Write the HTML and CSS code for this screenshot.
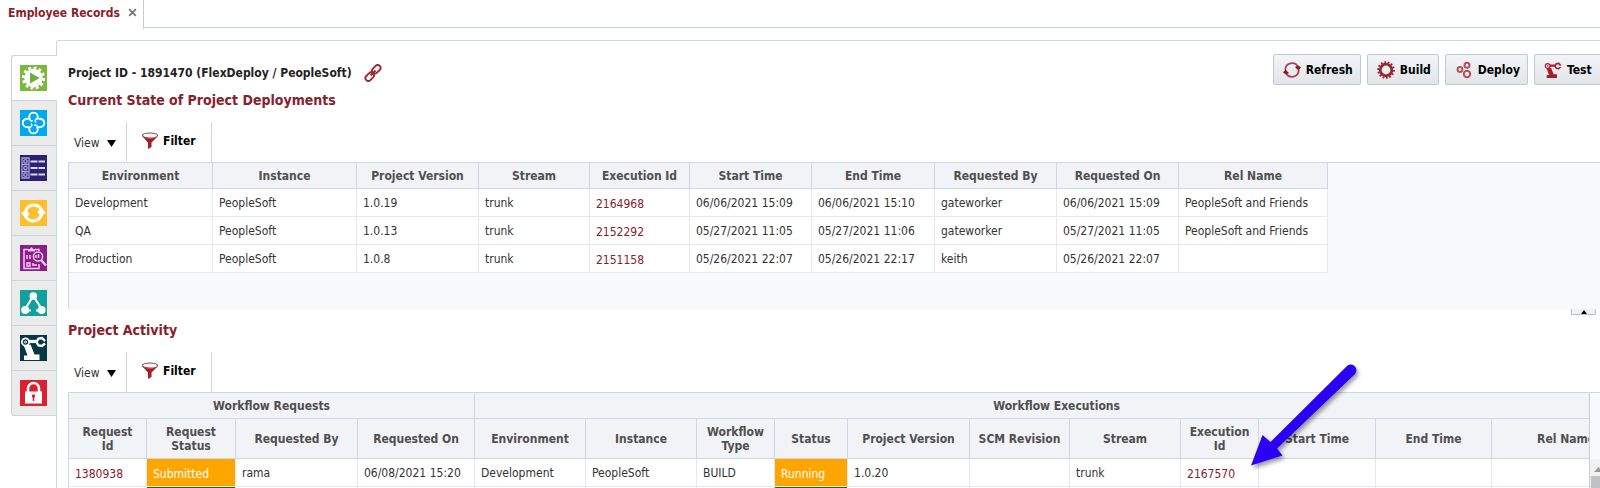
FILE: index.html
```html
<!DOCTYPE html>
<html lang="en">
<head>
<meta charset="utf-8">
<title>Employee Records</title>
<link rel="stylesheet" href="styles.css">
</head>
<body>
<svg class="defs" aria-hidden="true">
  <symbol id="funnel" viewBox="0 0 18 18">
    <path d="M1.500 4.500L7 10.500V17L10.500 15V10.500L16.500 4.500Q9 8.500 1.500 4.500Z" fill="#a51d25"/>
    <ellipse cx="9" cy="3.600" rx="7.500" ry="2.600" fill="#fff" stroke="#96414a" stroke-width="1.200"/>
  </symbol>
  <symbol id="arm" viewBox="0 0 27 26">
    <g fill="none" stroke="currentColor">
      <circle cx="5.500" cy="7" r="3.600" stroke-width="1.800"/>
      <circle cx="5.500" cy="7" r="1" stroke-width="1"/>
      <path d="M9 6.500H17" stroke-width="3.200"/>
      <path d="M25 6L22 3L18.500 3.500L16.500 7L18.500 10.500L22 11L25 8.500" stroke-width="2.400"/>
    </g>
    <path d="M4 11L10.500 9.500L14.500 19.500H19.500V25H4V20.500H7.500Z" fill="currentColor"/>
  </symbol>
</svg>

<div class="app">
  <header class="tabbar">
    <div class="tab">
      <a class="tab-link" href="#records">Employee Records</a>
      <button class="tab-close" type="button" aria-label="Close tab">
        <svg viewBox="0 0 8 8"><path d="M1 1L7 7M7 1L1 7" stroke="#777" stroke-width="1.600"/></svg>
      </button>
    </div>
    <div class="tabbar-rest"></div>
  </header>

  <div class="workspace">
    <nav class="side" aria-label="Project sections">
      <button class="side-tab active" type="button" aria-label="Executions">
        <svg viewBox="0 0 27 26"><rect width="27" height="26" fill="#7bb93c"/><circle cx="13.500" cy="13" r="9.200" fill="#fff"/><circle cx="13.500" cy="13" r="9.900" fill="none" stroke="#fff" stroke-width="3.400" pathLength="24" stroke-dasharray="1.100 .9"/><path d="M10 7.500L19.500 13L10 18.500Z" fill="#6db037"/></svg>
      </button>
      <button class="side-tab" type="button" aria-label="Configuration">
        <svg viewBox="0 0 27 26"><rect width="27" height="26" fill="#00a9ee"/><g fill="none" stroke="#fff" stroke-width="1.800"><path d="M9.500 8.500C8.500 5 10.500 2.700 13.500 2.700S18.500 5 17.500 8.500C21.500 8.500 24.300 10 24.300 13S21.500 17.500 17.500 17.500C18.500 21 16.500 23.300 13.500 23.300S8.500 21 9.500 17.500C5.500 17.500 2.700 16 2.700 13S5.500 8.500 9.500 8.500Z"/><path d="M9.500 8.500C10 11 11.500 11.500 13 10.500M17.500 8.500C15 9 14.500 11 16 12.500M17.500 17.500C17 15 15.500 14.500 14 15.500M9.500 17.500C12 17 12.500 15 11 13.500" stroke-width="1.500"/></g></svg>
      </button>
      <button class="side-tab" type="button" aria-label="Tasks">
        <svg viewBox="0 0 27 26"><rect width="27" height="26" fill="#2b2171"/><g fill="none" stroke="#aaa2dc" stroke-width="1.300"><path d="M2 3H9V23H2ZM2 9.500H9M2 16.500H9"/><circle cx="5.500" cy="6.300" r="1.700"/><circle cx="5.500" cy="13" r="1.700"/><circle cx="5.500" cy="19.700" r="1.700"/></g><path d="M10.500 6.500H25M10.500 13H25M10.500 19.500H25" stroke="#d9d5f2" stroke-width="2" stroke-dasharray="7 1"/></svg>
      </button>
      <button class="side-tab" type="button" aria-label="Sync">
        <svg viewBox="0 0 27 26"><rect width="27" height="26" fill="#fdbf2b"/><g fill="none" stroke="#fff" stroke-width="3"><path d="M5.500 12.500A8.300 8.300 0 0 1 20.500 8.500"/><path d="M21.500 13.500A8.300 8.300 0 0 1 6.500 17.500"/></g><path d="M1.500 13L6 9.500L9.500 14L5.500 19ZM25.500 13L21 16.500L17.500 12L21.500 7Z" fill="#fff"/></svg>
      </button>
      <button class="side-tab" type="button" aria-label="Reports">
        <svg viewBox="0 0 27 26"><rect width="27" height="26" fill="#8c1d87"/><g fill="none" stroke="#f0cdf0" stroke-width="1.500"><path d="M19 19V23.500H4V4.500H8M15 4.500H19V6"/><circle cx="18" cy="11.500" r="4.600"/><path d="M21 15L26 20.500" stroke-width="2.400"/><path d="M7 18H10V21H7ZM7 10V14M10 10V14M16 13V10M18.500 13V9M13 20H17M13 18V21"/></g><path d="M8 6.500V4H10Q11.500 .500 13 4H15V6.500Z" fill="#f0cdf0"/></svg>
      </button>
      <button class="side-tab" type="button" aria-label="Pipeline">
        <svg viewBox="0 0 27 26"><rect width="27" height="26" fill="#12a19a"/><path d="M12.500 7L5 19.500M14 7L22 19.500M6 20.500H21" stroke="#fff" stroke-width="2.200"/><path d="M11 20.500H16" stroke="#12a19a" stroke-width="3"/><g fill="#fff"><circle cx="13.300" cy="6" r="3.800"/><circle cx="5.200" cy="20" r="4"/><circle cx="21.600" cy="20" r="4"/></g></svg>
      </button>
      <button class="side-tab arm-tab" type="button" aria-label="Test automation">
        <svg viewBox="0 0 27 26"><rect width="27" height="26" fill="#063747"/><use href="#arm" width="27" height="26"/></svg>
      </button>
      <button class="side-tab" type="button" aria-label="Security">
        <svg viewBox="0 0 27 26"><rect width="27" height="26" fill="#dc2030"/><path d="M8 12V8.500A5.500 5.500 0 0 1 19 8.500V12" fill="none" stroke="#fff" stroke-width="2.600"/><rect x="5" y="11.500" width="17" height="12" fill="#fff"/><circle cx="13.500" cy="16" r="1.700" fill="#dc2030"/><path d="M13.500 16V21" stroke="#dc2030" stroke-width="1.600"/></svg>
      </button>
    </nav>

    <main class="panel">
      <div class="top">
        <div class="titles">
          <h1 class="project">Project ID - 1891470 (FlexDeploy / PeopleSoft)
            <a class="permalink" href="#permalink" aria-label="Project link"><svg viewBox="0 0 18 18"><g fill="none" stroke="#9c2b33" stroke-width="1.900"><rect x="-4.800" y="-2.900" width="9.600" height="5.800" rx="2.900" transform="translate(12.300 5.300) rotate(-45)"/><rect x="-4.800" y="-2.900" width="9.600" height="5.800" rx="2.900" transform="translate(5.700 12.700) rotate(-45)"/><path d="M6.500 11.500L11.500 6.500"/></g></svg></a>
          </h1>
          <h2 class="section-title">Current State of Project Deployments</h2>
        </div>
        <div class="actions">
          <button class="action" type="button"><svg viewBox="0 0 18 18"><g fill="none" stroke="#a8474e" stroke-width="1.800"><path d="M2.300 9A6.700 6.700 0 0 1 15 6"/><path d="M15.700 9A6.700 6.700 0 0 1 3 12"/></g><path d="M0 11.500L2.500 8.500L6 12L3 13.500ZM18 6.500L15.500 9.500L12 6L15 4.500Z" fill="#8e1720"/></svg>Refresh</button>
          <button class="action" type="button"><svg viewBox="0 0 18 18"><g fill="none" stroke="#98262e"><circle cx="9" cy="9" r="5.800" stroke-width="2.800"/><circle cx="9" cy="9" r="7.800" stroke-width="2" pathLength="28" stroke-dasharray="1 1"/></g></svg>Build</button>
          <button class="action" type="button"><svg viewBox="0 0 18 18"><g fill="none" stroke="#b4535a" stroke-width="2"><circle cx="5" cy="8.500" r="2.400"/><circle cx="12" cy="4.300" r="2.500"/><circle cx="12" cy="13" r="3.200"/></g></svg>Deploy</button>
          <button class="action" type="button"><svg class="red-arm" viewBox="0 0 27 26"><use href="#arm" width="27" height="26"/></svg>Test</button>
        </div>
      </div>

      <section>
        <div class="toolbar">
          <button class="view" type="button">View <svg viewBox="0 0 9 7"><path d="M0 0H9L4.500 7Z"/></svg></button>
          <button class="filter" type="button"><svg><use href="#funnel"/></svg>Filter</button>
        </div>
        <div class="grid-area deployments">
          <table class="grid">
            <colgroup><col class="w144"><col class="w144"><col class="w122"><col class="w111"><col class="w100"><col class="w122"><col class="w123"><col class="w122"><col class="w122"><col class="w149"></colgroup>
            <thead><tr><th>Environment</th><th>Instance</th><th>Project Version</th><th>Stream</th><th>Execution Id</th><th>Start Time</th><th>End Time</th><th>Requested By</th><th>Requested On</th><th>Rel Name</th></tr></thead>
            <tbody>
              <tr><td>Development</td><td>PeopleSoft</td><td>1.0.19</td><td>trunk</td><td class="low"><a href="#2164968">2164968</a></td><td>06/06/2021 15:09</td><td>06/06/2021 15:10</td><td>gateworker</td><td>06/06/2021 15:09</td><td>PeopleSoft and Friends</td></tr>
              <tr><td>QA</td><td>PeopleSoft</td><td>1.0.13</td><td>trunk</td><td class="low"><a href="#2152292">2152292</a></td><td>05/27/2021 11:05</td><td>05/27/2021 11:06</td><td>gateworker</td><td>05/27/2021 11:05</td><td>PeopleSoft and Friends</td></tr>
              <tr><td>Production</td><td>PeopleSoft</td><td>1.0.8</td><td>trunk</td><td class="low"><a href="#2151158">2151158</a></td><td>05/26/2021 22:07</td><td>05/26/2021 22:17</td><td>keith</td><td>05/26/2021 22:07</td><td></td></tr>
            </tbody>
          </table>
        </div>
      </section>

      <section>
        <div class="activity-head">
          <h2 class="section-title">Project Activity</h2>
          <button class="collapse" type="button" aria-label="Collapse pane"><svg viewBox="0 0 6 4"><path d="M0 4H6L3 0Z"/></svg></button>
        </div>
        <div class="toolbar">
          <button class="view" type="button">View <svg viewBox="0 0 9 7"><path d="M0 0H9L4.500 7Z"/></svg></button>
          <button class="filter" type="button"><svg><use href="#funnel"/></svg>Filter</button>
        </div>
        <div class="grid-area activity">
          <div class="viewport">
            <table class="grid">
              <colgroup><col class="w78"><col class="w89"><col class="w122"><col class="w117"><col class="w111"><col class="w111"><col class="w78"><col class="w73"><col class="w122"><col class="w100"><col class="w111"><col class="w78"><col class="w117"><col class="w116"><col class="w149"></colgroup>
              <thead>
                <tr><th colspan="4">Workflow Requests</th><th class="executions" colspan="11">Workflow Executions</th></tr>
                <tr class="tall"><th>Request Id</th><th>Request Status</th><th>Requested By</th><th>Requested On</th><th>Environment</th><th>Instance</th><th>Workflow Type</th><th>Status</th><th>Project Version</th><th>SCM Revision</th><th>Stream</th><th>Execution Id</th><th>Start Time</th><th>End Time</th><th>Rel Name</th></tr>
              </thead>
              <tbody>
                <tr><td class="low"><a href="#1380938">1380938</a></td><td class="low running">Submitted</td><td>rama</td><td>06/08/2021 15:20</td><td>Development</td><td>PeopleSoft</td><td>BUILD</td><td class="low running">Running</td><td>1.0.20</td><td></td><td>trunk</td><td class="low"><a href="#2167570">2167570</a></td><td></td><td></td><td></td></tr>
                <tr><td></td><td class="done"></td><td></td><td></td><td></td><td></td><td></td><td class="done"></td><td></td><td></td><td></td><td></td><td></td><td></td><td></td></tr>
              </tbody>
            </table>
          </div>
          <div class="scroll" aria-hidden="true">
            <div class="scroll-head"></div>
            <div class="scroll-track"><svg viewBox="0 0 9 5"><path d="M0 5H9L4.500 0Z" fill="#9a9a9a"/></svg><div class="thumb"></div></div>
          </div>
        </div>
      </section>
    </main>
  </div>

  <svg class="pointer" viewBox="0 0 120 120" aria-hidden="true">
    <path d="M101.500 6.500A5 5 0 0 1 110 14L32 88.500L37.500 95.500L6 105.500L17.500 75L25.500 82Z" fill="#2b00f5"/>
  </svg>
</div>
</body>
</html>
```

FILE: styles.css
```css
* { box-sizing: border-box; }

body {
  margin: 0;
  background: #fff;
  color: #333;
  font: 12px/14px "DejaVu Sans Condensed", "DejaVu Sans", Tahoma, sans-serif;
}

button {
  margin: 0;
  padding: 0;
  border: 0;
  background: none;
  color: inherit;
  font: inherit;
}

svg { display: block; }
a { color: #87212c; text-decoration: none; }
h1, h2 { margin: 0; }
.defs { position: absolute; width: 0; height: 0; }

.app {
  position: relative;
  display: flex;
  flex-direction: column;
  height: 100vh;
  overflow: hidden;
}

/* Document tabs */
.tabbar { display: flex; flex: none; align-items: flex-start; }
.tab {
  display: flex;
  align-items: center;
  gap: 8px;
  height: 29px;
  padding: 0 6px 4px 8px;
  border-right: 1px solid #c4ced7;
}
.tab-link { font-weight: bold; color: #8a1f2b; }
.tab-close svg { width: 9px; height: 9px; }
.tabbar-rest { flex: 1; height: 28px; border-bottom: 1px solid #c4d0d8; }

/* Side navigation and panel */
.workspace { display: flex; flex: 1; min-height: 0; padding: 11px 0 0 11px; }
.side { position: relative; z-index: 1; flex: none; width: 45px; margin-top: 15px; }
.side-tab {
  display: flex;
  align-items: center;
  width: 45px;
  height: 45px;
  padding-left: 8px;
  border: 1px solid #ccd3da;
  border-width: 0 0 1px 1px;
  background: #ebebeb;
}
.side-tab.active {
  width: 46px;
  height: 46px;
  border-top-width: 1px;
  border-top-left-radius: 3px;
  background: #fff;
}
.side-tab:last-child { border-bottom-left-radius: 3px; }
.side-tab svg { width: 27px; height: 26px; }
.arm-tab { color: #fff; }
.panel {
  flex: 1;
  min-width: 0;
  padding-left: 11px;
  border: 1px solid #ccd8e0;
  border-width: 1px 0 0 1px;
  border-top-left-radius: 3px;
}

/* Title and actions */
.top { display: flex; justify-content: space-between; height: 81px; }
.titles { padding-top: 22px; }
.project {
  display: flex;
  align-items: center;
  gap: 12px;
  height: 20px;
  font-size: 12px;
  color: #222;
}
.permalink svg { width: 18px; height: 18px; }
.section-title { font-size: 14px; line-height: 18px; color: #87212c; }
.titles .section-title { margin-top: 8px; }
.actions { display: flex; gap: 6px; margin: 13px -2px 0 0; }
.action {
  display: flex;
  align-items: center;
  gap: 5px;
  min-width: 68px;
  height: 31px;
  padding: 0 7px 0 9px;
  border: 1px solid #c0c8d0;
  border-radius: 2px;
  background: linear-gradient(#f3f4f6, #e1e5e9);
  color: #000;
  font-weight: bold;
}
.action svg { width: 18px; height: 18px; }
.red-arm { color: #a5202a; }

/* Table toolbars */
.toolbar { display: flex; height: 40px; }
.view {
  display: flex;
  align-items: center;
  gap: 7px;
  width: 59px;
  padding: 2px 0 0 6px;
  border-right: 1px solid #ccd6e0;
}
.view svg { width: 9px; height: 7px; }
.filter {
  display: flex;
  align-items: center;
  gap: 4px;
  width: 85px;
  padding: 0 0 2px 14px;
  border-right: 1px solid #ccd6e0;
  color: #000;
  font-weight: bold;
}
.filter svg { width: 18px; height: 18px; }

/* Data grids */
.grid-area { border: 1px solid #ccd9e5; border-width: 1px 0 0 1px; background: #f7f9fc; }
.deployments { min-height: 147px; }
.grid { table-layout: fixed; width: 0; border-spacing: 0; background: #fff; }
.grid th {
  height: 26px;
  padding: 0 8px;
  border: 1px solid #ccd9e5;
  border-width: 0 1px 1px 0;
  background: #f1f3f7;
  color: #4f4f4f;
}
.grid .tall th { height: 40px; }
.grid th.executions { padding-right: 10px; }
.grid td {
  height: 28px;
  padding: 0 0 0 6px;
  border: 1px solid #e3e9ee;
  border-width: 0 1px 1px 0;
  background-clip: padding-box;
  white-space: nowrap;
}
.grid td.low { padding-top: 2px; }
.grid td.running { background-color: #ffa500; color: #fff; }
.grid td.done { background-color: #1c6b18; }
.w73 { width: 73px; }
.w78 { width: 78px; }
.w89 { width: 89px; }
.w100 { width: 100px; }
.w111 { width: 111px; }
.w116 { width: 116px; }
.w117 { width: 117px; }
.w122 { width: 122px; }
.w123 { width: 123px; }
.w144 { width: 144px; }
.w149 { width: 149px; }

/* Activity pane */
.activity-head { display: flex; justify-content: space-between; align-items: flex-start; height: 43px; }
.activity-head .section-title { padding-top: 12px; }
.collapse {
  display: grid;
  place-items: center;
  width: 25px;
  height: 6px;
  margin-right: 4px;
  border: 1px solid #bcc2c8;
  border-top: 0;
  background: #eef0f2;
}
.collapse svg { width: 6px; height: 4px; }
.activity { display: flex; }
.viewport { flex: 1; min-width: 0; overflow: hidden; border-right: 1px solid #c4ced8; }
.scroll { display: flex; flex-direction: column; flex: none; width: 10px; overflow: hidden; }
.scroll-head { height: 66px; }
.scroll-track { flex: 1; padding: 8px 0 0 1px; background: #f1f1f1; }
.scroll-track svg { width: 9px; height: 5px; margin-left: 3px; }
.thumb { width: 16px; height: 40px; margin-top: 4px; background: #c1c1c1; }

/* Callout arrow laid over the grid */
.pointer {
  position: absolute;
  left: 1245px;
  top: 360px;
  width: 120px;
  height: 120px;
  filter: drop-shadow(2px 3px 2px rgba(0, 0, 0, 0.4));
}
```
